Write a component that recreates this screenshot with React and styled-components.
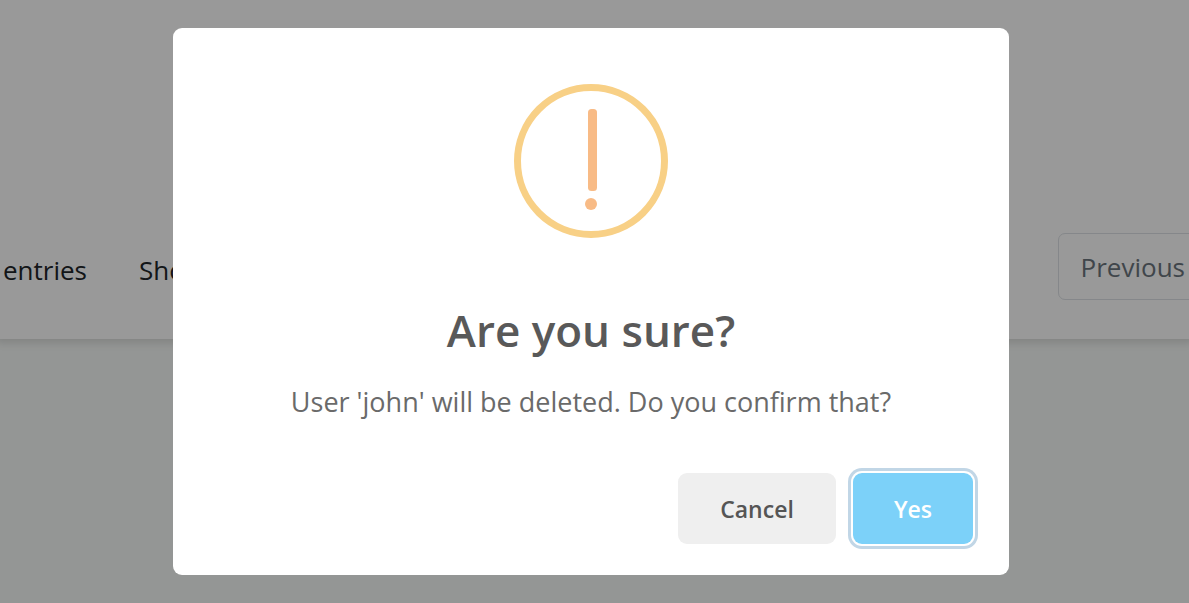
import React from "react";
import styled, { createGlobalStyle } from "styled-components";

const GlobalStyle = createGlobalStyle`
  * { box-sizing: border-box; }
  body {
    margin: 0;
    overflow: hidden;
    background: #f7faf8;
    color: #212529;
    font-family: "Segoe UI", "Open Sans", "Noto Sans", sans-serif;
  }
  button { font-family: inherit; cursor: pointer; }
`;

const Page = styled.main`
  min-height: 100vh;
  overflow: hidden;
`;

const TableCard = styled.section`
  background: #fff;
  padding: 233px 0 39px;
  box-shadow: 0 0 8px 4px rgba(0, 0, 0, 0.12);
`;

const TableFooter = styled.footer`
  display: flex;
  align-items: flex-start;
  gap: 52px;
  padding-left: 3px;
  font-size: 26px;
  line-height: 40px;
  white-space: nowrap;
`;

const TableInfo = styled.span`
  padding-top: 17px;
`;

const Pagination = styled.nav`
  margin-left: auto;
  margin-right: -19px;
`;

const PageButton = styled.button`
  display: block;
  height: 67px;
  padding: 0 22px;
  border: 1px solid #dee2e6;
  border-radius: 7px 0 0 7px;
  background: #fff;
  color: #6c757d;
  font-size: 26px;
`;

const Overlay = styled.div`
  position: fixed;
  inset: 0;
  display: flex;
  justify-content: center;
  align-items: center;
  padding: 0 7px 0 0;
  background: rgba(0, 0, 0, 0.4);
`;

const Dialog = styled.div`
  width: 100%;
  max-width: 836px;
  padding: 56px 36px 31px;
  border-radius: 9px;
  background: #fff;
  text-align: center;
`;

const WarningIcon = styled.svg`
  display: block;
  width: 154px;
  height: 154px;
  margin: 0 auto;
`;

const Title = styled.h2`
  margin: 60px 0 0;
  color: #595959;
  font-size: 44px;
  font-weight: 600;
  line-height: 64px;
`;

const Message = styled.p`
  margin: 20px 0 0;
  color: #6a6a6a;
  font-size: 27px;
  line-height: 40px;
`;

const Actions = styled.div`
  display: flex;
  justify-content: flex-end;
  gap: 17px;
  margin-top: 51px;
`;

const ActionButton = styled.button`
  width: ${({ $primary }) => ($primary ? "120px" : "158px")};
  height: 71px;
  padding: 0;
  border: 0;
  border-radius: 9px;
  outline: none;
  background: ${({ $primary }) => ($primary ? "#7cd1f9" : "#efefef")};
  box-shadow: ${({ $primary }) =>
    $primary ? "0 0 0 2px #fff, 0 0 0 5px #c1d6e6" : "none"};
  color: ${({ $primary }) => ($primary ? "#fff" : "#555")};
  font-size: 23px;
  font-weight: 600;
`;

export default function App() {
  return (
    <>
      <GlobalStyle />
      <Page>
        <TableCard>
          <TableFooter>
            <TableInfo>entries</TableInfo>
            <TableInfo>Showing</TableInfo>
            <Pagination aria-label="Table pages">
              <PageButton type="button">Previous</PageButton>
            </Pagination>
          </TableFooter>
        </TableCard>
      </Page>
      <Overlay>
        <Dialog
          role="alertdialog"
          aria-modal="true"
          aria-labelledby="confirm-title"
          aria-describedby="confirm-text"
        >
          <WarningIcon viewBox="0 0 154 154" aria-hidden="true">
            <circle cx="77" cy="77" r="73.5" fill="none" stroke="#f8d086" strokeWidth="7" />
            <rect x="74" y="25" width="9" height="82" rx="3.5" fill="#f8bb86" />
            <circle cx="77" cy="120" r="6" fill="#f8bb86" />
          </WarningIcon>
          <Title id="confirm-title">Are you sure?</Title>
          <Message id="confirm-text">
            User 'john' will be deleted. Do you confirm that?
          </Message>
          <Actions>
            <ActionButton type="button">Cancel</ActionButton>
            <ActionButton type="button" $primary>Yes</ActionButton>
          </Actions>
        </Dialog>
      </Overlay>
    </>
  );
}
